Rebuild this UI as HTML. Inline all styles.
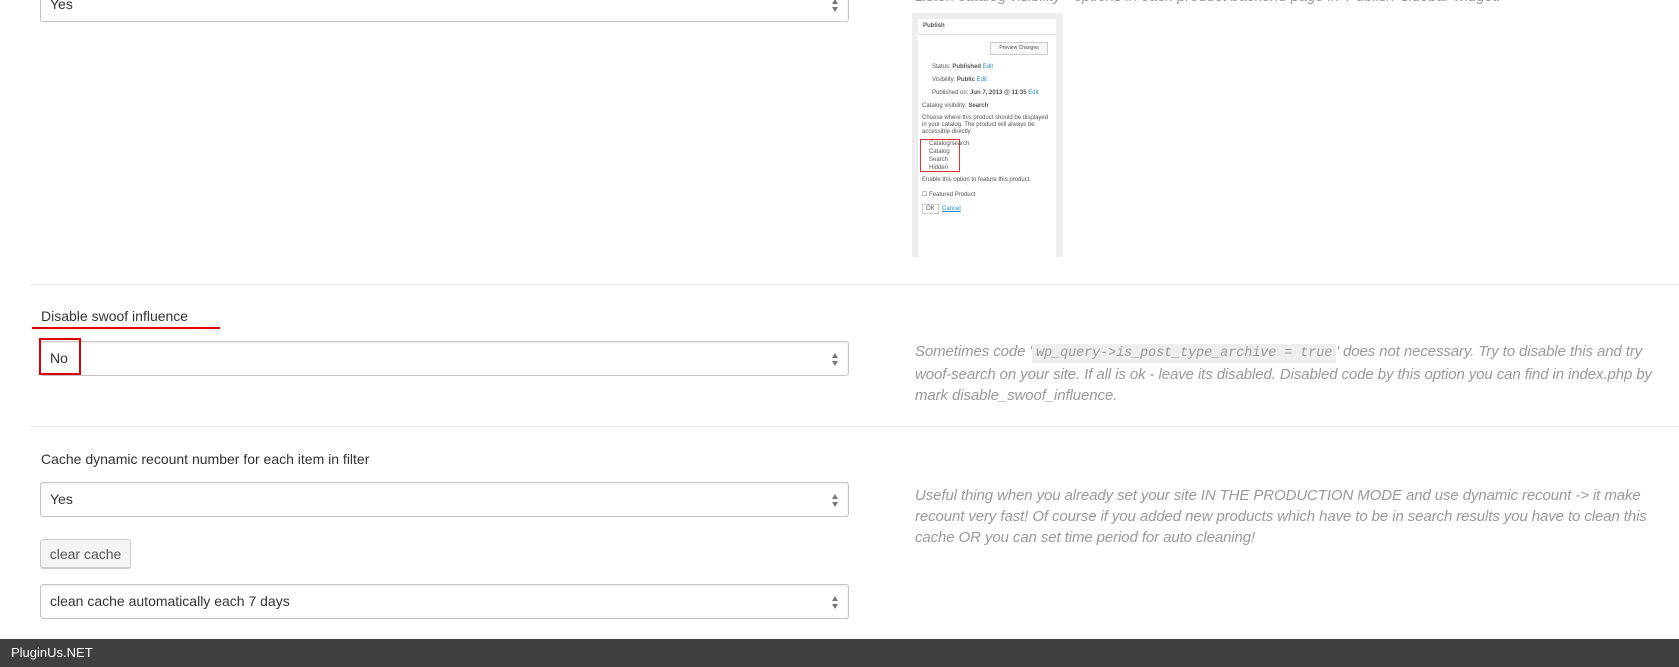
<!DOCTYPE html>
<html><head><meta charset="utf-8"><style>
body{margin:0;width:1679px;height:667px;overflow:hidden;background:#fff;font-family:"Liberation Sans",sans-serif;position:relative}
.a{position:absolute}
.sel{position:absolute;left:40px;width:809px;height:35px;border:1px solid #c4c4c4;border-radius:3px;box-shadow:inset 0 1px 2px rgba(0,0,0,.08);font-size:14px;color:#333;line-height:33px;box-sizing:border-box;padding-left:9px;background:#fff}
.sel:after{content:"";position:absolute;right:10px;top:11px;border:3.5px solid transparent;border-bottom:5px solid #777;border-top:0}
.sel:before{content:"";position:absolute;right:10px;top:19px;border:3.5px solid transparent;border-top:5px solid #777;border-bottom:0}
.hr{position:absolute;left:30px;right:0;height:1px;background:#e5e9ec}
.lab{position:absolute;left:41px;font-size:14px;color:#333}
.desc{position:absolute;left:915px;width:762px;font-size:15px;font-style:italic;color:#999;line-height:21px;letter-spacing:-0.1px}
code{font-family:"Liberation Mono",monospace;font-size:13.5px;background:#eee;padding:2px 4px}
</style></head><body>
<div class="sel" style="top:-13px">Yes</div>
<div class="desc" style="top:-14px">Listen catalog visibility - options in each product backend page in 'Publish' sidebar widget.</div>
<div class="a" style="left:912px;top:13px;width:151px;height:244px;background:#eee">
 <div class="a" style="left:6px;top:6px;width:138px;height:238px;background:#fff;font-size:6px;color:#555">
  <div class="a" style="left:5px;top:4px;font-weight:bold">Publish</div>
  <div class="a" style="left:0;top:15px;width:138px;height:1px;background:#e5e5e5"></div>
  <div class="a" style="left:72px;top:23px;width:56px;height:11px;border:1px solid #ccc;background:#f7f7f7;font-size:5px;line-height:11px;text-align:center">Preview Changes</div>
  <div class="a" style="left:14px;top:45px">Status: <b>Published</b> <span style="color:#2a8ac8">Edit</span></div>
  <div class="a" style="left:14px;top:58px">Visibility: <b>Public</b> <span style="color:#2a8ac8">Edit</span></div>
  <div class="a" style="left:14px;top:71px">Published on: <b>Jun 7, 2013 @ 11:35</b> <span style="color:#2a8ac8">Edit</span></div>
  <div class="a" style="left:4px;top:84px">Catalog visibility: <b>Search</b></div>
  <div class="a" style="left:4px;top:96px;width:130px;line-height:7px">Choose where this product should be displayed in your catalog. The product will always be accessible directly.</div>
  <div class="a" style="left:2px;top:120px;width:40px;height:33px;border:1px solid #d33;line-height:8px;padding-left:8px;box-sizing:border-box">Catalog/search<br>Catalog<br>Search<br>Hidden</div>
  <div class="a" style="left:4px;top:158px">Enable this option to feature this product.</div>
  <div class="a" style="left:4px;top:172px">☐ Featured Product</div>
  <div class="a" style="left:4px;top:185px;border:1px solid #ccc;padding:1px 3px">OK</div><div class="a" style="left:24px;top:187px;color:#2a8ac8;text-decoration:underline">Cancel</div>
 </div>
</div>
<div class="hr" style="top:284px"></div>
<div class="lab" style="top:308px">Disable swoof influence</div>
<div class="a" style="left:32px;top:327px;width:188px;height:2px;background:#d00"></div>
<div class="sel" style="top:341px">No</div>
<div class="a" style="left:39px;top:338px;width:42px;height:37px;border:2px solid #d00;box-sizing:border-box"></div>
<div class="desc" style="top:341px">Sometimes code '<code>wp_query-&gt;is_post_type_archive = true</code>' does not necessary. Try to disable this and try woof-search on your site. If all is ok - leave its disabled. Disabled code by this option you can find in index.php by mark disable_swoof_influence.</div>
<div class="hr" style="top:426px"></div>
<div class="lab" style="top:451px">Cache dynamic recount number for each item in filter</div>
<div class="sel" style="top:482px">Yes</div>
<div class="a" style="left:40px;top:539px;width:91px;height:29px;border:1px solid #ccc;border-radius:3px;background:#f4f4f4;font-size:14px;color:#555;line-height:28px;text-align:center;box-sizing:border-box;box-shadow:0 1px 0 #ccc">clear cache</div>
<div class="sel" style="top:584px">clean cache automatically each 7 days</div>
<div class="desc" style="top:485px">Useful thing when you already set your site IN THE PRODUCTION MODE and use dynamic recount -&gt; it make recount very fast! Of course if you added new products which have to be in search results you have to clean this cache OR you can set time period for auto cleaning!</div>
<div class="a" style="left:0;top:639px;width:1679px;height:28px;background:#404040;color:#fff;font-size:13px;line-height:28px;padding-left:11px;box-sizing:border-box">PluginUs.NET</div>
</body></html>
